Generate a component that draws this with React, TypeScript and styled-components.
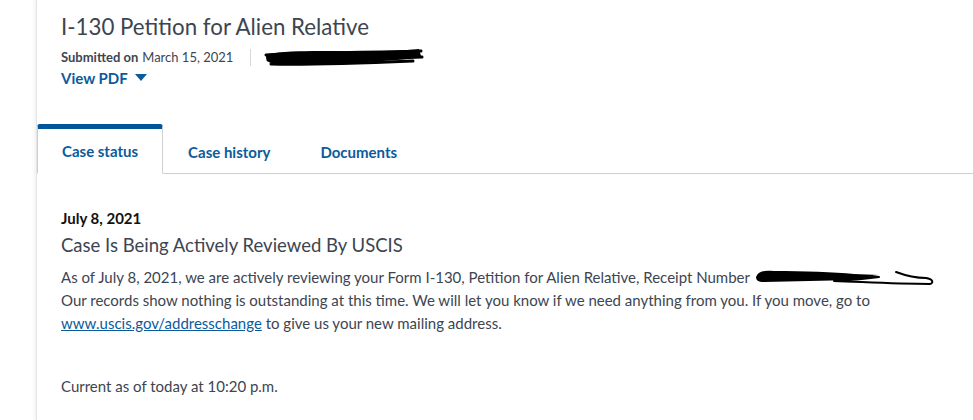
import React, { useState } from 'react'
import styled, { createGlobalStyle } from 'styled-components'

const GlobalStyle = createGlobalStyle`
  html, body {
    margin: 0;
    padding: 0;
    background: #ffffff;
  }
  body {
    font-family: 'Lato', 'Open Sans', sans-serif;
    color: #3d4551;
  }
`

const Page = styled.div`
  min-height: 420px;
  padding-left: 36px;
  display: flex;
`

const Card = styled.div`
  flex: 1;
  min-height: 420px;
  border-left: 1px solid #e4e4e4;
  box-shadow: -2px 0 3px rgba(0, 0, 0, 0.05);
  background: #ffffff;
`

const Header = styled.header`
  padding: 11px 24px 0 24px;
`

const Title = styled.h1`
  margin: 0;
  font-size: 22.3px;
  font-weight: 400;
  line-height: 32px;
  color: #3d4551;
`

const MetaRow = styled.div`
  display: flex;
  align-items: center;
  margin-top: 3px;
  font-size: 13px;
  line-height: 18px;
  color: #3d4551;
`

const MetaLabel = styled.span`
  font-weight: 700;
  margin-right: 4px;
`

const Divider = styled.span`
  width: 1px;
  height: 17px;
  background: #d6d7d9;
  margin: 0 12px 0 17px;
`

const PdfButton = styled.button`
  display: flex;
  align-items: center;
  gap: 7px;
  margin-top: 1px;
  padding: 0;
  border: none;
  background: none;
  font-family: inherit;
  font-size: 15px;
  font-weight: 700;
  color: #0b5b9c;
  cursor: pointer;
`

const Tabs = styled.nav`
  display: flex;
  margin-top: 37px;
  border-bottom: 1px solid #cfcfcf;
`

const Tab = styled.button<{ $active?: boolean }>`
  height: 50px;
  padding: 0 24px;
  margin-bottom: -1px;
  font-family: inherit;
  font-size: 15px;
  font-weight: 700;
  color: #0b5b9c;
  background: ${(p) => (p.$active ? '#ffffff' : 'transparent')};
  cursor: pointer;
  border: none;
  border-top: 5px solid ${(p) => (p.$active ? '#005499' : 'transparent')};
  border-left: 1px solid ${(p) => (p.$active ? '#cfcfcf' : 'transparent')};
  border-right: 1px solid ${(p) => (p.$active ? '#cfcfcf' : 'transparent')};
  border-bottom: ${(p) => (p.$active ? '1px solid #ffffff' : 'none')};
  border-radius: 3px 3px 0 0;
`

const Body = styled.section`
  padding: 34px 24px 0 24px;
`

const EventDate = styled.div`
  font-size: 15px;
  font-weight: 700;
  color: #111111;
  line-height: 20px;
`

const StatusTitle = styled.h2`
  margin: 4px 0 0 0;
  font-size: 18.5px;
  font-weight: 400;
  line-height: 26px;
  color: #3d4551;
`

const Paragraph = styled.p`
  margin: 8px 0 0 0;
  font-size: 15px;
  line-height: 23px;
  color: #3d4551;
`

const Anchor = styled.a`
  color: #0b5b9c;
  text-decoration: underline;
`

const Redacted = styled.span`
  display: inline-block;
  position: relative;
  width: 120px;
  height: 14px;
  vertical-align: -2px;

  svg {
    position: absolute;
    left: 0;
    top: -4px;
    overflow: visible;
  }
`

const Stamp = styled.div`
  margin-top: 40px;
  font-size: 15px;
  line-height: 23px;
  color: #3d4551;
`

const MetaScribble = () => (
  <svg width="162" height="22" viewBox="0 0 162 22">
    <path
      d="M4 8 C30 4 70 5 110 6 C130 5 145 4 156 3 L158 10 C150 12 140 14 120 15 C90 17 50 18 8 17 C3 15 2 11 4 8 Z"
      fill="#000"
    />
    <path
      d="M3 9 C40 6 100 7 158 5 M5 14 C50 15 110 13 159 11 M8 18 C50 19 100 17 150 15"
      fill="none"
      stroke="#000"
      strokeWidth="3"
      strokeLinecap="round"
    />
  </svg>
)

const ReceiptScribble = () => (
  <svg width="182" height="24" viewBox="0 0 182 24">
    <path
      d="M2 10 C4 4 10 3 20 4 C50 4 80 5 100 7 L125 8 C110 10 105 12 100 13 C70 14 40 14 10 15 C4 15 2 13 2 10 Z"
      fill="#000"
    />
    <path
      d="M60 11 C80 10 105 10 125 10 C110 12 100 13 80 14 C110 15 140 17 176 17 C180 16 179 12 172 11 C160 11 150 8 142 5"
      fill="none"
      stroke="#000"
      strokeWidth="2"
      strokeLinecap="round"
      strokeLinejoin="round"
    />
  </svg>
)

const App: React.FC = () => {
  const [tab, setTab] = useState('status')

  return (
    <>
      <GlobalStyle />
      <Page>
        <Card>
          <Header>
            <Title>I-130 Petition for Alien Relative</Title>
            <MetaRow>
              <MetaLabel>Submitted on</MetaLabel>
              <span>March 15, 2021</span>
              <Divider />
              <MetaScribble />
            </MetaRow>
            <PdfButton>
              View PDF
              <svg width="12" height="8" viewBox="0 0 12 8">
                <path d="M0 0 H12 L6 7 Z" fill="#0b5b9c" />
              </svg>
            </PdfButton>
          </Header>

          <Tabs>
            <Tab $active={tab === 'status'} onClick={() => setTab('status')}>Case status</Tab>
            <Tab $active={tab === 'history'} onClick={() => setTab('history')}>Case history</Tab>
            <Tab $active={tab === 'docs'} onClick={() => setTab('docs')}>Documents</Tab>
          </Tabs>

          <Body>
            <EventDate>July 8, 2021</EventDate>
            <StatusTitle>Case Is Being Actively Reviewed By USCIS</StatusTitle>
            <Paragraph>
              As of July 8, 2021, we are actively reviewing your Form I-130, Petition for Alien Relative, Receipt Number{' '}
              <Redacted>
                <ReceiptScribble />
              </Redacted>
              <br />
              Our records show nothing is outstanding at this time. We will let you know if we need anything from you. If you move, go to{' '}
              <Anchor href="#">www.uscis.gov/addresschange</Anchor> to give us your new mailing address.
            </Paragraph>
            <Stamp>Current as of today at 10:20 p.m.</Stamp>
          </Body>
        </Card>
      </Page>
    </>
  )
}

export default App
